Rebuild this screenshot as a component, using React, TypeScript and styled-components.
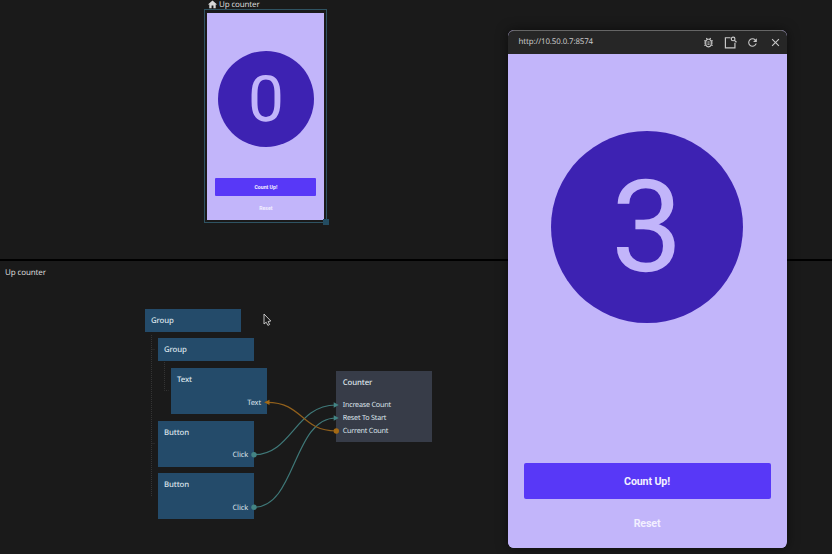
import React from 'react';
import styled, { createGlobalStyle } from 'styled-components';
import { MdHome, MdOutlineBugReport, MdRefresh, MdClose } from 'react-icons/md';

const GlobalStyle = createGlobalStyle`
  * { box-sizing: border-box; }
  body { margin: 0; background: #1a1a1a; overflow: hidden; }
  #root { height: 554px; }
`;

const Editor = styled.main`
  position: relative;
  display: grid;
  grid-template-rows: 259px 295px;
  width: 832px;
  height: 554px;
  background: #1a1a1a;
  color: #d8d8d8;
  font-family: 'Noto Sans', 'Open Sans', sans-serif;
  text-rendering: geometricPrecision;
`;

const PreviewPanel = styled.section`
  padding-left: 204px;
`;

const FrameTitle = styled.div`
  display: flex;
  align-items: center;
  gap: 1px;
  height: 9px;
  padding-left: 3px;
  font-size: 8px;
  line-height: 9px;
  letter-spacing: -0.15px;
  svg { width: 11px; height: 11px; margin-top: -1px; }
`;

const SelectionFrame = styled.div`
  position: relative;
  width: 123px;
  height: 214px;
  padding: 3px 2.4px;
  border: 1px solid #2f5362;
`;

const ResizeHandle = styled.span`
  position: absolute;
  right: -3px;
  bottom: -3px;
  width: 6px;
  height: 6px;
  background: #234c61;
`;

const Screen = styled.div<{ $small?: boolean }>`
  display: flex;
  flex-direction: column;
  align-items: center;
  width: ${p => (p.$small ? '117px' : '278px')};
  height: ${p => (p.$small ? '207px' : '494px')};
  padding: ${p => (p.$small ? '38px 8px 0' : '76.5px 15.5px 0')};
  background: #c2b5fa;
  font-family: Roboto, sans-serif;
`;

const Dial = styled.div<{ $small?: boolean }>`
  display: flex;
  align-items: center;
  justify-content: center;
  flex: none;
  width: ${p => (p.$small ? '96px' : '192px')};
  height: ${p => (p.$small ? '96px' : '192px')};
  padding-top: ${p => (p.$small ? '1px' : '3px')};
  border-radius: 50%;
  background: #3d22b2;
  color: #c2b5fa;
  font-size: ${p => (p.$small ? '64px' : '128px')};
  line-height: 1;
`;

const CountButton = styled.button<{ $small?: boolean }>`
  flex: none;
  width: 100%;
  height: ${p => (p.$small ? '18px' : '36px')};
  margin-top: ${p => (p.$small ? '31px' : '140.5px')};
  padding: 0;
  border: 0;
  border-radius: ${p => (p.$small ? '1px' : '2px')};
  background: #5838f7;
  color: #f2efff;
  font: 700 ${p => (p.$small ? '5.2px' : '10.7px')} Roboto, sans-serif;
  letter-spacing: ${p => (p.$small ? '0' : '-0.15px')};
`;

const ResetButton = styled(CountButton)`
  margin-top: ${p => (p.$small ? '3px' : '6.5px')};
  background: transparent;
`;

const GraphPanel = styled.section`
  position: relative;
  border-top: 2px solid #000;
`;

const GraphTitle = styled.h1`
  margin: 7px 0 0 5px;
  font-size: 8px;
  line-height: 9px;
  font-weight: 400;
  letter-spacing: -0.12px;
`;

const Node = styled.div<{ $x: number; $y: number; $h: number; $gray?: boolean }>`
  position: absolute;
  left: ${p => p.$x}px;
  top: ${p => p.$y - 261}px;
  display: flex;
  flex-direction: column;
  width: 96px;
  height: ${p => p.$h}px;
  padding: 7px 6px 0 ${p => (p.$gray ? '6.3px' : '6px')};
  background: ${p => (p.$gray ? '#373c48' : '#244b6a')};
  font-size: 7.8px;
  line-height: 10px;
  font-weight: 500;
  letter-spacing: -0.1px;
  color: #dbe3ea;
`;

const OutPort = styled.span`
  margin-top: 12.500px;
  align-self: flex-end;
  font-size: 7.4px;
  font-weight: 400;
`;

const InPorts = styled.div`
  display: grid;
  grid-auto-rows: 12.8px;
  align-items: center;
  margin-top: 11px;
  font-size: 7.2px;
  font-weight: 400;
  letter-spacing: -0.2px;
`;

const Wires = styled.svg`
  position: absolute;
  left: 0;
  top: -261px;
  width: 500px;
  height: 554px;
  pointer-events: none;
`;

const Popup = styled.aside`
  position: absolute;
  left: 508px;
  top: 30px;
  width: 278.5px;
  height: 518px;
  overflow: hidden;
  border-radius: 6px;
  box-shadow: 0 0 12px rgba(0, 0, 0, 0.5);
  background: #c2b5fa;
`;

const PopupBar = styled.header`
  display: flex;
  align-items: center;
  justify-content: space-between;
  height: 24px;
  padding: 0 5px 1px 10.5px;
  border-top: 1px solid #666;
  border-radius: 6px 6px 0 0;
  background: #262626;
  color: #c8c8c8;
  font-size: 7.9px;
  letter-spacing: -0.12px;
`;

const Tools = styled.nav`
  display: flex;
  align-items: center;
  gap: 9.3px;
  svg { display: block; width: 13px; height: 13px; }
`;

const nodes = [
  { title: 'Group', x: 145, y: 309, h: 23 },
  { title: 'Group', x: 158, y: 338, h: 23 },
  { title: 'Text', x: 171, y: 368, h: 46, port: 'Text' },
  { title: 'Button', x: 158, y: 420.5, h: 46, port: 'Click' },
  { title: 'Button', x: 158, y: 473, h: 46, port: 'Click' },
];

function AppScreen({ value, small }: { value: number; small?: boolean }) {
  return (
    <Screen $small={small}>
      <Dial $small={small}>{value}</Dial>
      <CountButton $small={small}>Count Up!</CountButton>
      <ResetButton $small={small}>Reset</ResetButton>
    </Screen>
  );
}

function InspectWindowIcon() {
  return (
    <svg viewBox="0 0 12 12" fill="none" stroke="currentColor" strokeWidth="1.1">
      <path d="M6 1.6H1.3v9.3h8.8V6.3" />
      <circle cx="8.4" cy="2.7" r="1.7" />
      <path d="m9.7 4 1.8 1.8" />
    </svg>
  );
}

export default function App() {
  return (
    <Editor>
      <GlobalStyle />
      <PreviewPanel>
        <FrameTitle><MdHome /><span>Up counter</span></FrameTitle>
        <SelectionFrame>
          <AppScreen value={0} small />
          <ResizeHandle />
        </SelectionFrame>
      </PreviewPanel>
      <GraphPanel>
        <GraphTitle>Up counter</GraphTitle>
        {nodes.map(n => (
          <Node key={n.y} $x={n.x} $y={n.y} $h={n.h}>
            {n.title}
            {n.port && <OutPort>{n.port}</OutPort>}
          </Node>
        ))}
        <Node $x={336.4} $y={371} $h={71} $gray>
          Counter
          <InPorts>
            <span>Increase Count</span>
            <span>Reset To Start</span>
            <span>Current Count</span>
          </InPorts>
        </Node>
        <Wires viewBox="0 0 500 554" fill="none">
          <path d="M151.5 335V496M151.5 349.5h4M151.5 443.5h4M164.5 362v28.5h4" stroke="#343434" strokeDasharray="1 1" />
          <path d="M254 454.7C292 454.7 295 405 336 405M254 507.3C296 507.3 293 418 336 418" stroke="#3f7878" strokeWidth="1.2" />
          <path d="M267 402.3C303 402.3 301 431 336 431" stroke="#91601c" strokeWidth="1.2" />
          <circle cx="254" cy="454.7" r="2.7" fill="#438484" />
          <circle cx="254" cy="507.3" r="2.7" fill="#438484" />
          <path d="m333.7 402.3 5 2.7-5 2.7zM333.7 415.3l5 2.7-5 2.7z" fill="#438484" />
          <circle cx="336.3" cy="431" r="2.7" fill="#a56a14" />
          <path d="m269.5 399.7-5.3 2.6 5.3 2.6z" fill="#a56a14" />
          <path d="M264 314v10l2.2-1.8 1.7 3.2 1.7-.9-1.5-3 2.7-.5z" fill="#1a1a1a" stroke="#d4d4d4" strokeWidth=".9" />
        </Wires>
      </GraphPanel>
      <Popup>
        <PopupBar>
          http://10.50.0.7:8574
          <Tools>
            <MdOutlineBugReport />
            <InspectWindowIcon />
            <MdRefresh />
            <MdClose />
          </Tools>
        </PopupBar>
        <AppScreen value={3} />
      </Popup>
    </Editor>
  );
}
